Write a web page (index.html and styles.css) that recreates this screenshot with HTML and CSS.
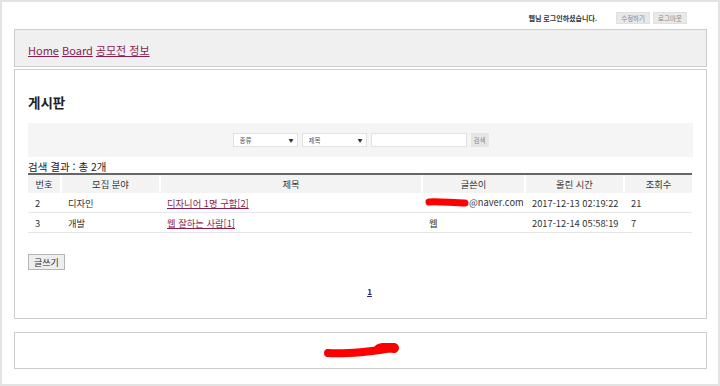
FILE: index.html
```html
<!DOCTYPE html>
<html lang="ko">
<head>
    <meta charset="UTF-8">
    <title>게시판</title>
    <link rel="stylesheet" href="styles.css">
</head>
<body>
    <div class="frame">
        <div class="userbar">
            <span class="welcome">웹님 로그인하셨습니다.</span>
            <button class="small-btn">수정하기</button>
            <button class="small-btn">로그아웃</button>
        </div>

        <div class="header">
            <a href="#">Home</a>
            <a href="#">Board</a>
            <a href="#">공모전 정보</a>
        </div>

        <div class="main">
            <h2 class="title">게시판</h2>

            <form class="search">
                <span class="sel-wrap">
                    <select class="sel">
                        <option>종류</option>
                    </select>
                </span>
                <span class="sel-wrap">
                    <select class="sel">
                        <option>제목</option>
                    </select>
                </span>
                <input type="text" class="keyword">
                <button type="button" class="search-btn">검색</button>
            </form>

            <div class="count">검색 결과 : 총 2개</div>

            <table class="board">
                <colgroup>
                    <col class="c-no">
                    <col class="c-field">
                    <col class="c-title">
                    <col class="c-writer">
                    <col class="c-date">
                    <col class="c-hit">
                </colgroup>
                <thead>
                    <tr>
                        <th>번호</th>
                        <th>모집 분야</th>
                        <th>제목</th>
                        <th>글쓴이</th>
                        <th>올린 시간</th>
                        <th>조회수</th>
                    </tr>
                </thead>
                <tbody>
                    <tr>
                        <td>2</td>
                        <td>디자인</td>
                        <td><a href="#">디자니어 1명 구함[2]</a></td>
                        <td><span class="mask"><svg width="44" height="10" viewBox="0 0 44 10"><path d="M4 5 C12 4, 28 6, 40 6" stroke="#f00" stroke-width="7" stroke-linecap="round" fill="none"/></svg></span>@naver.com</td>
                        <td>2017-12-13 02:19:22</td>
                        <td>21</td>
                    </tr>
                    <tr>
                        <td>3</td>
                        <td>개발</td>
                        <td><a href="#">웹 잘하는 사람[1]</a></td>
                        <td>웹</td>
                        <td>2017-12-14 05:58:19</td>
                        <td>7</td>
                    </tr>
                </tbody>
            </table>

            <button class="write-btn">글쓰기</button>

            <div class="paging"><a href="#">1</a></div>
        </div>

        <div class="footer">
            <svg width="76" height="16" viewBox="0 0 76 16"><path d="M5 10 C18 11, 28 10, 40 9 C52 8, 62 6, 70 5" stroke="#f00" stroke-width="8" stroke-linecap="round" fill="none"/><path d="M56 6 C62 4, 68 4, 71 5" stroke="#f00" stroke-width="10" stroke-linecap="round" fill="none"/></svg>
        </div>
    </div>
</body>
</html>
```

FILE: styles.css
```css
body {
    margin: 0;
    font-family: "Noto Sans CJK KR", "Noto Sans", sans-serif;
    color: #222;
    background-color: #ffffff;
}
.frame {
    width: 720px;
    height: 386px;
    box-sizing: border-box;
    border: 2px solid #e3e3e3;
    padding: 0 11px 0 12px;
}
.userbar {
    height: 27px;
    box-sizing: border-box;
    padding: 5px 20px 0 0;
    display: flex;
    justify-content: flex-end;
    align-items: center;
    gap: 3px;
}
.welcome {
    font-size: 7px;
    font-weight: bold;
    color: #333;
    margin-right: 16px;
}
.small-btn {
    font-family: inherit;
    font-size: 6.5px;
    color: #888;
    background-color: #e9e9e9;
    border: 1px solid #e0e0e0;
    height: 12px;
    padding: 0 4px;
    line-height: 10px;
}
.header {
    height: 38px;
    box-sizing: border-box;
    background-color: #f0f0f0;
    border: 1px solid #cccccc;
    padding: 4px 0 0 13px;
    display: flex;
    align-items: center;
    gap: 3px;
}
.header a {
    font-size: 11px;
    color: #8a1d50;
}
.main {
    margin-top: 2px;
    height: 250px;
    box-sizing: border-box;
    border: 1px solid #cccccc;
    padding: 0 13px;
}
.title {
    margin: 24px 0 0;
    font-size: 13.5px;
    line-height: 16px;
    font-weight: bold;
}
.search {
    margin-top: 13px;
    height: 34px;
    background-color: #f5f5f5;
    display: flex;
    justify-content: center;
    align-items: center;
    gap: 4px;
}
.sel-wrap {
    position: relative;
    display: block;
}
.sel-wrap::after {
    content: "▼";
    position: absolute;
    right: 4px;
    top: 3px;
    font-size: 5px;
    color: #333;
    pointer-events: none;
}
.sel {
    display: block;
    width: 65px;
    height: 14px;
    font-family: inherit;
    font-size: 6.5px;
    color: #555;
    border: 1px solid #e2e2e2;
    background-color: #ffffff;
    padding: 0 6px;
    appearance: none;
    -webkit-appearance: none;
    border-radius: 0;
}
.keyword {
    width: 96px;
    height: 14px;
    box-sizing: border-box;
    border: 1px solid #e2e2e2;
    padding: 0;
}
.search-btn {
    height: 14px;
    width: 18px;
    padding: 0;
    font-family: inherit;
    font-size: 6.5px;
    color: #888;
    background-color: #e6e6e6;
    border: none;
}
.count {
    margin-top: 3px;
    font-size: 10.5px;
    line-height: 13px;
}
.board {
    width: 664px;
    table-layout: fixed;
    border-collapse: collapse;
    font-size: 9.3px;
}
.board th {
    height: 18px;
    font-weight: normal;
    color: #333;
    background-color: #f3f3f3;
    border-top: 2px solid #666;
    border-left: 2px solid #ffffff;
    padding: 0;
}
.board th:first-child {
    border-left: none;
}
.board td {
    height: 19px;
    padding: 0 0 0 7px;
    border-bottom: 1px solid #e6e6e6;
    color: #333;
    white-space: nowrap;
}
.board td a {
    color: #8a1d50;
}
.c-no { width: 33px; }
.c-field { width: 99px; }
.c-title { width: 262px; }
.c-writer { width: 103px; }
.c-date { width: 99px; }
.c-hit { width: 68px; }
.mask {
    display: inline-block;
    vertical-align: middle;
    margin-left: -4px;
}
.write-btn {
    margin-top: 21px;
    height: 16px;
    padding: 0 5px;
    font-family: inherit;
    font-size: 9px;
    color: #333;
    background-color: #eeeeee;
    border: 1px solid #b5b5b5;
}
.paging {
    margin-top: 15px;
    padding-left: 18px;
    text-align: center;
    font-size: 8px;
    font-weight: bold;
}
.paging a {
    color: #1a237e;
}
.footer {
    margin-top: 13px;
    height: 37px;
    box-sizing: border-box;
    border: 1px solid #cccccc;
    display: flex;
    justify-content: center;
    align-items: center;
}
```
